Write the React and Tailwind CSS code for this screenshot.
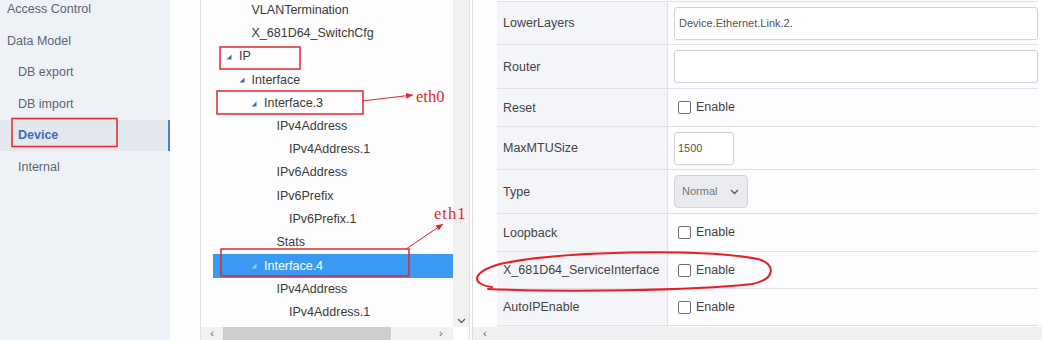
import React from "react";

const sidebar = [
  { label: "Access Control", level: 0 },
  { label: "Data Model", level: 0 },
  { label: "DB export", level: 1 },
  { label: "DB import", level: 1 },
  { label: "Device", level: 1, active: true },
  { label: "Internal", level: 1 },
];

const tree = [
  { label: "VLANTermination", level: 1 },
  { label: "X_681D64_SwitchCfg", level: 1 },
  { label: "IP", level: 0, open: true },
  { label: "Interface", level: 1, open: true },
  { label: "Interface.3", level: 2, open: true },
  { label: "IPv4Address", level: 3 },
  { label: "IPv4Address.1", level: 4 },
  { label: "IPv6Address", level: 3 },
  { label: "IPv6Prefix", level: 3 },
  { label: "IPv6Prefix.1", level: 4 },
  { label: "Stats", level: 3 },
  { label: "Interface.4", level: 2, open: true, selected: true },
  { label: "IPv4Address", level: 3 },
  { label: "IPv4Address.1", level: 4 },
];

const rows = [
  { name: "LowerLayers", h: "h-[43px]", kind: "input", value: "Device.Ethernet.Link.2." },
  { name: "Router", h: "h-[44px]", kind: "input", value: "" },
  { name: "Reset", h: "h-[38px]", kind: "check" },
  { name: "MaxMTUSize", h: "h-[43px]", kind: "small", value: "1500" },
  { name: "Type", h: "h-[44px]", kind: "select", value: "Normal" },
  { name: "Loopback", h: "h-[38px]", kind: "check" },
  { name: "X_681D64_ServiceInterface", h: "h-[37px]", kind: "check" },
  { name: "AutoIPEnable", h: "h-[37px]", kind: "check" },
  { name: "", h: "h-[37px]", kind: "none" },
];

const indent = ["pl-[26px]", "pl-[38.5px]", "pl-[51px]", "pl-[63.5px]", "pl-[76px]"];

function Arrow({ light }) {
  return (
    <svg width="6" height="6" viewBox="0 0 6 6" className="absolute -ml-[13px] mt-[1px]">
      <polygon points="5.5,0.5 5.5,5.5 0.5,5.5" fill={light ? "#9cc8f5" : "#3b6ea8"} />
    </svg>
  );
}

function Checkbox() {
  return (
    <div className="flex items-center gap-[5px]">
      <div className="w-[13px] h-[13px] border border-[#6f6f6f] rounded-[2px] bg-white" />
      <span className="text-[12.5px] text-[#444]">Enable</span>
    </div>
  );
}

function Value({ row }) {
  if (row.kind === "input")
    return (
      <div className="w-full h-[33px] border border-[#cfd3d8] rounded-[3px] bg-white flex items-center px-[4px] text-[11px] text-[#555]">
        {row.value}
      </div>
    );
  if (row.kind === "small")
    return (
      <div className="w-[60px] h-[33px] border border-[#cfd3d8] rounded-[3px] bg-white flex items-center px-[3px] text-[11px] text-[#555]">
        {row.value}
      </div>
    );
  if (row.kind === "select")
    return (
      <div className="w-[74px] h-[33px] border border-[#d3d6db] rounded-[4px] bg-[#e9ebef] flex items-center justify-between pl-[7px] pr-[8px] text-[11px] text-[#777]">
        <span>{row.value}</span>
        <svg width="9" height="6" viewBox="0 0 9 6">
          <path d="M1 1l3.5 3.5L8 1" fill="none" stroke="#555" strokeWidth="1.3" />
        </svg>
      </div>
    );
  if (row.kind === "check") return <div className="pl-[4px]"><Checkbox /></div>;
  return null;
}

export default function App() {
  return (
    <div className="relative w-[1042px] h-[340px] overflow-hidden bg-[#fdfdfd] flex font-['Liberation_Sans',Arial,sans-serif]">
      {/* Sidebar */}
      <div className="w-[170px] shrink-0 bg-[#eef2f7] flex flex-col -mt-[6.5px]">
        {sidebar.map((s) => (
          <div
            key={s.label}
            className={`h-[31.6px] shrink-0 flex items-center text-[12.5px] ${s.level ? "pl-[18px]" : "pl-[7px]"} ${
              s.active ? "bg-[#e3e8ef] border-r-[2px] border-[#4a7fc0] font-bold text-[#3d6eb3]" : "text-[#5d6570]"
            }`}
          >
            {s.label}
          </div>
        ))}
      </div>

      <div className="w-[30px] shrink-0" />

      {/* Tree panel */}
      <div className="w-[270px] shrink-0 border-l border-r border-[#e1e1e1] flex flex-col">
        <div className="flex-1 flex min-h-0">
          <div className="flex-1 pl-[12px] overflow-hidden">
            <div className="-mt-[1.2px] flex flex-col">
              {tree.map((t, i) => (
                <div
                  key={i}
                  className={`h-[23.2px] shrink-0 flex items-center text-[12.5px] ${indent[t.level]} ${
                    t.selected ? "bg-[#3a9af3] text-white h-[24px]" : "text-[#3a3a3a]"
                  }`}
                >
                  {t.open && <Arrow light={t.selected} />}
                  {t.label}
                </div>
              ))}
            </div>
          </div>
          <div className="w-[16px] bg-[#f1f1f1] flex flex-col justify-end items-center pb-[3px]">
            <svg width="9" height="6" viewBox="0 0 9 6">
              <path d="M1 1l3.5 3.5L8 1" fill="none" stroke="#666" strokeWidth="1.4" />
            </svg>
          </div>
        </div>
        <div className="h-[13px] shrink-0 bg-[#f1f1f1] flex items-center">
          <span className="w-[22px] text-center text-[11px] leading-none text-[#666]">‹</span>
          <div className="w-[168px] h-full bg-[#cdcdcd]" />
          <div className="flex-1" />
          <span className="w-[14px] text-[11px] leading-none text-[#666]">›</span>
          <div className="w-[16px] h-full bg-white" />
        </div>
      </div>

      <div className="w-[2px] shrink-0" />

      {/* Detail panel */}
      <div className="flex-1 border-l border-[#dcdcdc] flex flex-col min-w-0">
        <div className="flex-1 min-h-0 overflow-hidden pl-[24px] pr-[4px] pt-[1px]">
          <div className="border-t border-[#e4e0ea] flex flex-col">
            {rows.map((r, i) => (
              <div key={i} className={`${r.h} shrink-0 flex border-b border-[#e4e0ea]`}>
                <div className="w-[171px] shrink-0 bg-[#f3f5f9] border-r border-[#e4e0ea] flex items-center pl-[6px] pt-[1px] text-[12.5px] text-[#444] whitespace-nowrap">
                  {r.name}
                </div>
                <div className="flex-1 bg-[#fdfcfe] flex items-center pl-[6px]">
                  <Value row={r} />
                </div>
              </div>
            ))}
          </div>
        </div>
        <div className="h-[13px] shrink-0 bg-[#f0f0f0] flex items-center pl-[10px] text-[11px] leading-none text-[#666]">‹</div>
      </div>

      {/* Annotations */}
      <svg className="absolute inset-0 pointer-events-none" width="1042" height="340" viewBox="0 0 1042 340">
        <defs>
          <marker id="ah" markerWidth="8" markerHeight="8" refX="7" refY="4" orient="auto">
            <path d="M0 1L7 4L0 7z" fill="#e5262b" />
          </marker>
        </defs>
        <g fill="none" stroke="#e5262b" strokeWidth="1.5">
          <rect x="12" y="118.5" width="105" height="28" />
          <rect x="220" y="47" width="80" height="22" />
          <rect x="217" y="91" width="146" height="23" />
          <rect x="221" y="249" width="188" height="27" />
          <line x1="362" y1="101" x2="413" y2="95" strokeWidth="1" markerEnd="url(#ah)" />
          <line x1="406" y1="249" x2="443" y2="224" strokeWidth="1" markerEnd="url(#ah)" />
        </g>
        <path
          d="M492 287 C470 284 472 272 500 264 C560 251 700 248 758 259 C776 264 776 279 752 284 C690 291 560 292 488 289"
          fill="none"
          stroke="#ec1c24"
          strokeWidth="2"
          strokeLinecap="round"
        />
      </svg>
      <div className="absolute left-[416px] top-[85px] text-[16.5px] text-[#e5262b] font-['Liberation_Serif',serif]">eth0</div>
      <div className="absolute left-[434px] top-[202px] text-[16.5px] text-[#e5262b] font-['Liberation_Serif',serif] tracking-[1px]">eth1</div>
    </div>
  );
}
